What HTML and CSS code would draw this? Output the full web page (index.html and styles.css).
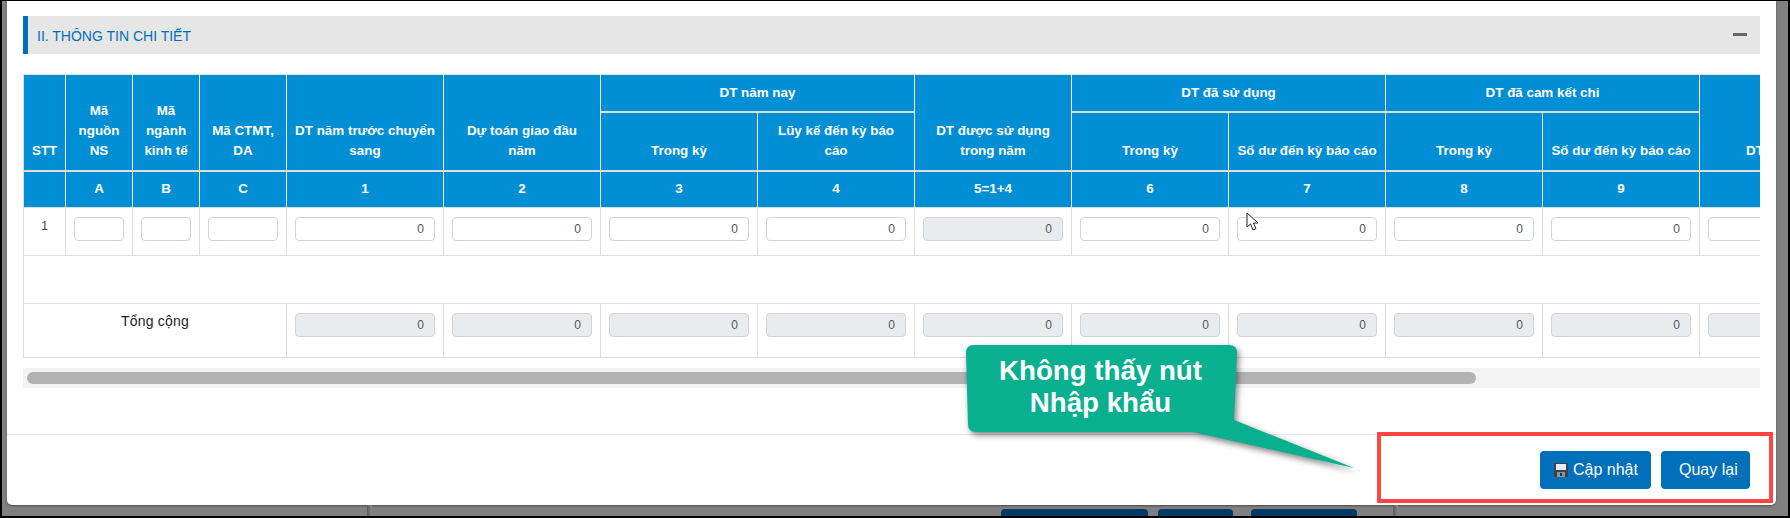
FILE: index.html
```html
<!DOCTYPE html>
<html lang="vi">
<head>
<meta charset="utf-8">
<title>Thông tin chi tiết</title>
<link rel="stylesheet" href="styles.css">
</head>
<body>
<div class="screen">
  <div class="backdrop">
    <div class="modal">
      <div class="modal-body">
        <div class="section-bar">
          <span class="section-title">II. THÔNG TIN CHI TIẾT</span>
          <span class="minus"></span>
        </div>
        <div class="table-wrap">
          <table class="grid">
            <colgroup>
              <col class="c-stt"><col class="c-a"><col class="c-b"><col class="c-c">
              <col class="c-n"><col class="c-n"><col class="c-n"><col class="c-n"><col class="c-n">
              <col class="c-n"><col class="c-n"><col class="c-n"><col class="c-n"><col class="c-n">
            </colgroup>
            <thead>
              <tr class="h1">
                <th rowspan="2">STT</th>
                <th rowspan="2">Mã nguồn NS</th>
                <th rowspan="2">Mã ngành kinh tế</th>
                <th rowspan="2">Mã CTMT, DA</th>
                <th rowspan="2">DT năm trước chuyển sang</th>
                <th rowspan="2">Dự toán giao đầu năm</th>
                <th colspan="2" class="mid">DT năm nay</th>
                <th rowspan="2">DT được sử dụng trong năm</th>
                <th colspan="2" class="mid">DT đã sử dụng</th>
                <th colspan="2" class="mid">DT đã cam kết chi</th>
                <th rowspan="2">DT còn lại</th>
              </tr>
              <tr class="h2">
                <th>Trong kỳ</th>
                <th>Lũy kế đến kỳ báo cáo</th>
                <th>Trong kỳ</th>
                <th>Số dư đến kỳ báo cáo</th>
                <th>Trong kỳ</th>
                <th>Số dư đến kỳ báo cáo</th>
              </tr>
              <tr class="h3">
                <th></th><th>A</th><th>B</th><th>C</th><th>1</th><th>2</th><th>3</th><th>4</th><th>5=1+4</th><th>6</th><th>7</th><th>8</th><th>9</th><th></th>
              </tr>
            </thead>
            <tbody>
              <tr class="r-data">
                <td class="stt">1</td>
                <td><div class="field"></div></td>
                <td><div class="field"></div></td>
                <td><div class="field"></div></td>
                <td><div class="field">0</div></td>
                <td><div class="field">0</div></td>
                <td><div class="field">0</div></td>
                <td><div class="field">0</div></td>
                <td><div class="field off">0</div></td>
                <td><div class="field">0</div></td>
                <td><div class="field">0</div></td>
                <td><div class="field">0</div></td>
                <td><div class="field">0</div></td>
                <td><div class="field"></div></td>
              </tr>
              <tr class="r-empty"><td colspan="14"></td></tr>
              <tr class="r-total">
                <td colspan="4" class="total-label">Tổng cộng</td>
                <td><div class="field off">0</div></td>
                <td><div class="field off">0</div></td>
                <td><div class="field off">0</div></td>
                <td><div class="field off">0</div></td>
                <td><div class="field off">0</div></td>
                <td><div class="field off">0</div></td>
                <td><div class="field off">0</div></td>
                <td><div class="field off">0</div></td>
                <td><div class="field off">0</div></td>
                <td><div class="field off"></div></td>
              </tr>
            </tbody>
          </table>
        </div>
        <div class="scroll-track"><div class="scroll-thumb"></div></div>
      </div>
      <div class="modal-footer">
        <button class="btn btn-save" type="button">
          <svg class="floppy" viewBox="0 0 14 14" width="14" height="14" aria-hidden="true">
            <path d="M0 0H13L14 1V14H0Z" fill="#3d4247"/>
            <rect x="2" y="1" width="10" height="6" fill="#e6edf2"/>
            <rect x="3" y="9" width="8" height="5" fill="#8d949a"/>
            <rect x="6" y="10" width="2" height="3" fill="#2d3136"/>
          </svg>
          <span>Cập nhật</span>
        </button>
        <button class="btn btn-back" type="button">Quay lại</button>
      </div>
    </div>
    <div class="behind">
      <span class="seam s1"></span>
      <span class="behind-btn b1"></span>
      <span class="behind-btn b2"></span>
      <span class="behind-btn b3"></span>
      <span class="seam s2"></span>
    </div>
  </div>

  <div class="red-box"></div>

  <div class="callout">
    <svg class="callout-shape" viewBox="960 340 410 140" width="410" height="140" aria-hidden="true">
      <path d="M974 345H1229Q1237 345 1237 353L1234 420L1354 468L1193 432H976Q968 432 968 424L966 353Q966 345 974 345Z" fill="#08b08f"/>
    </svg>
    <div class="callout-text">Không thấy nút<br>Nhập khẩu</div>
  </div>

  <svg class="cursor" viewBox="0 0 13 19" width="13" height="19" aria-hidden="true">
    <path d="M1 1V15L4.5 12L7 18L10 16.6L7.4 11H12Z" fill="#fff" stroke="#222" stroke-width="1"/>
  </svg>
</div>
</body>
</html>
```
FILE: styles.css
```css
* { box-sizing: border-box; }
html, body { margin: 0; padding: 0; }
body {
  width: 1790px;
  height: 518px;
  overflow: hidden;
  background: #000;
  font-family: "Liberation Sans", Arial, sans-serif;
}
.screen {
  position: relative;
  width: 1790px;
  height: 518px;
  padding: 1px 2px 2px 2px;
  background: #000;
}
.backdrop {
  height: 515px;
  background: #808080;
  padding: 0 12px 0 5px;
  display: flex;
  flex-direction: column;
}
.modal {
  height: 504px;
  flex: none;
  background: #fff;
  border-radius: 0 0 5px 5px;
  display: flex;
  flex-direction: column;
  box-shadow: 0 1px 2px rgba(0, 0, 0, .4);
}
.modal-body {
  flex: 1;
  min-height: 0;
  padding: 15px 16px 0 16px;
}
.section-bar {
  height: 38px;
  background: #e6e6e6;
  border-left: 5px solid #0070ba;
  display: flex;
  align-items: center;
  justify-content: space-between;
  padding: 0 13px 0 9px;
}
.section-title {
  font-size: 14px;
  color: #0070ba;
  padding-top: 2px;
}
.minus {
  width: 14px;
  height: 3px;
  background: #666;
  margin-top: -2px;
}
.table-wrap {
  margin-top: 20px;
  overflow: hidden;
}
.grid {
  border-collapse: collapse;
  table-layout: fixed;
  width: 1833px;
}
.c-stt { width: 42px; }
.c-a { width: 67px; }
.c-b { width: 67px; }
.c-c { width: 87px; }
.c-n { width: 157px; }
.grid th {
  background: #008fd5;
  color: #fff;
  font-size: 13.4px;
  font-weight: 700;
  line-height: 20px;
  text-align: center;
  vertical-align: bottom;
  padding: 0 8px 9px;
  border: 1px solid #fff;
  border-top-color: #ddd;
  border-bottom: 2px solid #ddd;
}
.grid th:first-child { border-left-color: #ddd; }
.grid .h1 { height: 37px; }
.grid .h1 th { border-top: 1px solid #ddd; }
.grid .h1 th.mid { vertical-align: middle; padding-bottom: 0; }
.grid .h2 { height: 59px; }
.grid .h3 { height: 37px; }
.grid .h3 th { vertical-align: middle; padding-bottom: 0; border-bottom: 1px solid #ddd; }
.grid td {
  padding: 9px 8px 0;
  border: 1px solid #ddd;
  vertical-align: top;
  font-size: 12px;
  color: #444;
}
.r-data { height: 48px; }
.r-empty { height: 48px; }
.r-total { height: 54px; }
.grid td.stt { text-align: center; padding: 11px 0 0; }
.grid td.total-label {
  text-align: center;
  font-weight: 400;
  font-size: 14px;
  padding-top: 9px;
  color: #222;
  letter-spacing: .2px;
}
.field {
  height: 24px;
  border: 1px solid #ced4da;
  border-radius: 4px;
  background: #fff;
  font-size: 12px;
  line-height: 22px;
  color: #555;
  text-align: right;
  padding: 0 10px;
}
.field.off { background: #e9ecef; }
.scroll-track {
  margin-top: 10px;
  height: 20px;
  background: #f3f3f3;
  padding: 4px;
}
.scroll-thumb {
  width: 1449px;
  height: 12px;
  border-radius: 6px;
  background: #b3b3b3;
}
.modal-footer {
  height: 71px;
  flex: none;
  border-top: 1px solid #e5e5e5;
  display: flex;
  justify-content: flex-end;
  align-items: flex-start;
  gap: 10px;
  padding: 16px 26px 0 0;
}
.btn {
  height: 38px;
  border: 0;
  border-radius: 4px;
  background: #0070ba;
  color: #fff;
  font-family: inherit;
  font-size: 16px;
  display: flex;
  align-items: center;
}
.btn-save { width: 111px; padding: 0 0 0 14px; gap: 5px; }
.btn-back { width: 89px; padding: 0 0 0 18px; }
.floppy { display: block; }
.behind {
  flex: 1;
  padding: 4px 0 0 360px;
  display: flex;
}
.behind-btn {
  height: 7px;
  background: #003a66;
  border-radius: 4px 4px 0 0;
}
.seam {
  width: 5px;
  height: 11px;
  margin-top: -4px;
  background: linear-gradient(90deg, #5c5c5c, #6a6a6a 40%, #8a8a8a);
}
.b1 { width: 147px; margin-left: 629px; }
.b2 { width: 75px; margin-left: 10px; }
.b3 { width: 106px; margin-left: 18px; }
.s2 { margin-left: 36px; }
.red-box {
  position: absolute;
  left: 1377px;
  top: 432px;
  width: 396px;
  height: 71px;
  border: 4px solid #ff4444;
}
.callout {
  position: absolute;
  left: 960px;
  top: 340px;
  width: 410px;
  height: 140px;
}
.callout-shape {
  display: block;
  overflow: visible;
  filter: drop-shadow(2px 3px 3px rgba(0, 0, 0, .5));
}
.callout-text {
  position: absolute;
  left: 5px;
  top: 15px;
  width: 271px;
  text-align: center;
  font-size: 27.7px;
  line-height: 32px;
  font-weight: 700;
  color: #fff;
}
.cursor {
  position: absolute;
  left: 1246px;
  top: 212px;
}
```
